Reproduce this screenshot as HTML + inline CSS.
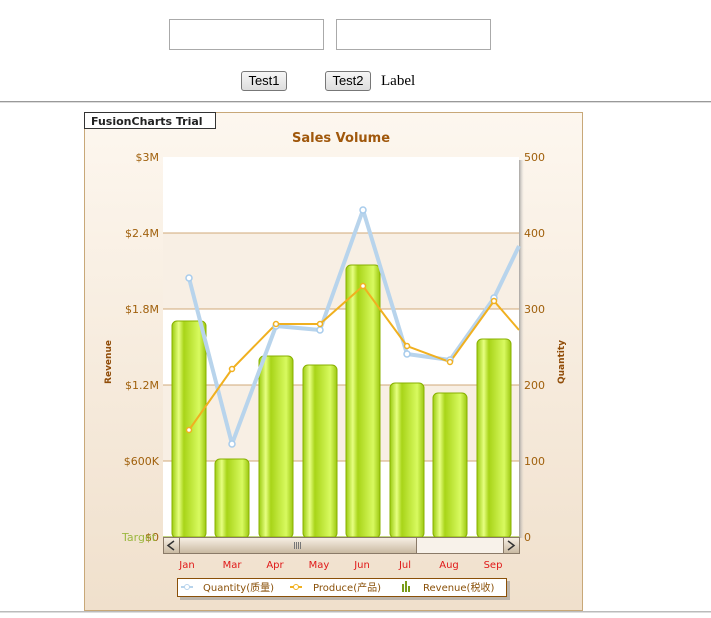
<!DOCTYPE html><html><head><style>
body{margin:0;width:711px;height:618px;background:#fff;position:relative;overflow:hidden;font-family:"Liberation Sans",sans-serif}
.in{position:absolute;top:19px;width:155px;height:31px;border:1px solid #aaa;box-sizing:border-box;background:#fff}
.b{position:absolute;top:71px;height:20px;width:46px;border:1px solid #777;border-radius:3px;background:linear-gradient(#f6f6f6,#ddd);font-size:13px;text-align:center;line-height:18px;box-sizing:border-box}
.hr{position:absolute;left:0;width:711px;height:0;border-top:1px solid #999;border-bottom:1px solid #ddd}
</style></head><body>
<div class="in" style="left:169px"></div><div class="in" style="left:336px"></div>
<div class="b" style="left:241px">Test1</div><div class="b" style="left:325px">Test2</div>
<div style="position:absolute;left:381px;top:73px;font:15px 'Liberation Serif',serif">Label</div>
<div class="hr" style="top:101px"></div>
<div class="hr" style="top:611px;border-top-color:#bbb"></div>
<svg style="position:absolute;left:0;top:0" width="711" height="618" font-family="DejaVu Sans,sans-serif">
<defs>
<linearGradient id="bg" x1="0" y1="0" x2="0" y2="1"><stop offset="0" stop-color="#fdf7ef"/><stop offset="1" stop-color="#f0e0cc"/></linearGradient>
<linearGradient id="bar" x1="0" y1="0" x2="1" y2="0"><stop offset="0" stop-color="#9ccc10"/><stop offset=".2" stop-color="#e6ff80"/><stop offset=".35" stop-color="#a8d418"/><stop offset=".8" stop-color="#d8fa60"/><stop offset="1" stop-color="#9cc810"/></linearGradient>
<linearGradient id="sb" x1="0" y1="0" x2="0" y2="1"><stop offset="0" stop-color="#f8f0e6"/><stop offset="1" stop-color="#c8b8a0"/></linearGradient>
<linearGradient id="sh" x1="0" y1="0" x2="1" y2="0"><stop offset="0" stop-color="#666"/><stop offset="1" stop-color="#ccc" stop-opacity="0"/></linearGradient>
</defs>
<rect x="84.5" y="112.5" width="498" height="498" fill="url(#bg)" stroke="#c8a878"/>
<rect x="84.5" y="112.5" width="131" height="16" fill="#fff" stroke="#333"/>
<text x="91" y="125" font-size="11" font-weight="bold" fill="#222">FusionCharts Trial</text>
<text x="341" y="142" font-size="13" font-weight="bold" fill="#a0580c" text-anchor="middle">Sales Volume</text>
<rect x="517" y="160" width="7" height="378" fill="url(#sh)"/>
<rect x="163" y="157" width="356" height="76" fill="#fff"/>
<rect x="163" y="233" width="356" height="76" fill="#f8efe4"/>
<rect x="163" y="309" width="356" height="76" fill="#fff"/>
<rect x="163" y="385" width="356" height="76" fill="#f8efe4"/>
<rect x="163" y="461" width="356" height="76" fill="#fff"/>
<g stroke="#d0a878"><line x1="163" y1="233" x2="519" y2="233"/><line x1="163" y1="309" x2="519" y2="309"/><line x1="163" y1="385" x2="519" y2="385"/><line x1="163" y1="461" x2="519" y2="461"/></g>
<g font-size="11" fill="#a0600c" text-anchor="end">
<text x="159" y="161">$3M</text><text x="159" y="237">$2.4M</text><text x="159" y="313">$1.8M</text><text x="159" y="389">$1.2M</text><text x="159" y="465">$600K</text><text x="159" y="541">$0</text></g>
<text x="122" y="541" font-size="11" fill="#9cb840">Target</text>
<g font-size="11" fill="#a0600c"><text x="524" y="161">500</text><text x="524" y="237">400</text><text x="524" y="313">300</text><text x="524" y="389">200</text><text x="524" y="465">100</text><text x="524" y="541">0</text></g>
<text transform="translate(111,362) rotate(-90)" font-size="9" font-weight="bold" fill="#904c08" text-anchor="middle">Revenue</text>
<text transform="translate(564,362) rotate(-90)" font-size="9" font-weight="bold" fill="#904c08" text-anchor="middle">Quantity</text>
<g fill="url(#bar)" stroke="#88b000">
<rect x="172" y="321" width="34" height="217" rx="5"/><rect x="215" y="459" width="34" height="79" rx="5"/>
<rect x="259" y="356" width="34" height="182" rx="5"/><rect x="303" y="365" width="34" height="173" rx="5"/>
<rect x="346" y="265" width="34" height="273" rx="5"/><rect x="390" y="383" width="34" height="155" rx="5"/>
<rect x="433" y="393" width="34" height="145" rx="5"/><rect x="477" y="339" width="34" height="199" rx="5"/></g>
<polyline points="189,278 232,444 276,326 320,330 363,210 407,354 450,360 494,298 519,246" fill="none" stroke="#b8d4ec" stroke-width="4" stroke-linejoin="round"/>
<polyline points="189,430 232,369 276,324 320,324 363,286 407,346 450,362 494,301 519,330" fill="none" stroke="#f0b020" stroke-width="2"/>
<g fill="#fff" stroke="#a8ccec" stroke-width="1.5"><circle cx="189" cy="278" r="3"/><circle cx="232" cy="444" r="3"/><circle cx="276" cy="326" r="3"/><circle cx="320" cy="330" r="3"/><circle cx="363" cy="210" r="3"/><circle cx="407" cy="354" r="3"/><circle cx="450" cy="360" r="3"/><circle cx="494" cy="298" r="3"/></g>
<g fill="#fff" stroke="#f0b020" stroke-width="1.5"><circle cx="189" cy="430" r="2.5"/><circle cx="232" cy="369" r="2.5"/><circle cx="276" cy="324" r="2.5"/><circle cx="320" cy="324" r="2.5"/><circle cx="363" cy="286" r="2.5"/><circle cx="407" cy="346" r="2.5"/><circle cx="450" cy="362" r="2.5"/><circle cx="494" cy="301" r="2.5"/></g>
<line x1="163" y1="537" x2="519" y2="537" stroke="#88b000"/>
<rect x="163.5" y="537.5" width="356" height="16" fill="#f8f2ea" stroke="#8a7a68"/>
<rect x="179.5" y="537.5" width="237" height="16" fill="url(#sb)" stroke="#8a7a68"/>
<rect x="163.5" y="537.5" width="16" height="16" fill="url(#sb)" stroke="#8a7a68"/>
<rect x="503.5" y="537.5" width="16" height="16" fill="url(#sb)" stroke="#8a7a68"/>
<path d="M174 541 L168 545.5 L174 550 M508 541 L514 545.5 L508 550" fill="none" stroke="#333" stroke-width="1.5"/>
<path d="M294.5 542v7M296.5 542v7M298.5 542v7M300.5 542v7" stroke="#777"/>
<g font-size="10" fill="#e01818" text-anchor="middle"><text x="187" y="568">Jan</text><text x="232" y="568">Mar</text><text x="275" y="568">Apr</text><text x="319" y="568">May</text><text x="362" y="568">Jun</text><text x="405" y="568">Jul</text><text x="449" y="568">Aug</text><text x="493" y="568">Sep</text></g>
<rect x="180" y="581" width="330" height="19" fill="#888" opacity=".5"/>
<rect x="177.5" y="578.5" width="329" height="18" fill="#fff" stroke="#8a5008"/>
<g font-family="DejaVu Sans,Noto Sans CJK SC,sans-serif" font-size="10" fill="#8a5008">
<text x="203" y="591">Quantity(质量)</text><text x="313" y="591">Produce(产品)</text><text x="423" y="591">Revenue(税收)</text></g>
<path d="M181 587h12" stroke="#b8d4ec" stroke-width="2"/><circle cx="187" cy="587" r="2.5" fill="#fff" stroke="#b8d4ec"/>
<path d="M290 587h12" stroke="#f0b020" stroke-width="2"/><circle cx="296" cy="587" r="2.5" fill="#fff" stroke="#f0b020"/>
<path d="M402 584h2v8h-2zM405 581h2v11h-2zM408 586h2v6h-2z" fill="#7a9c18"/>
</svg>
</body></html>
